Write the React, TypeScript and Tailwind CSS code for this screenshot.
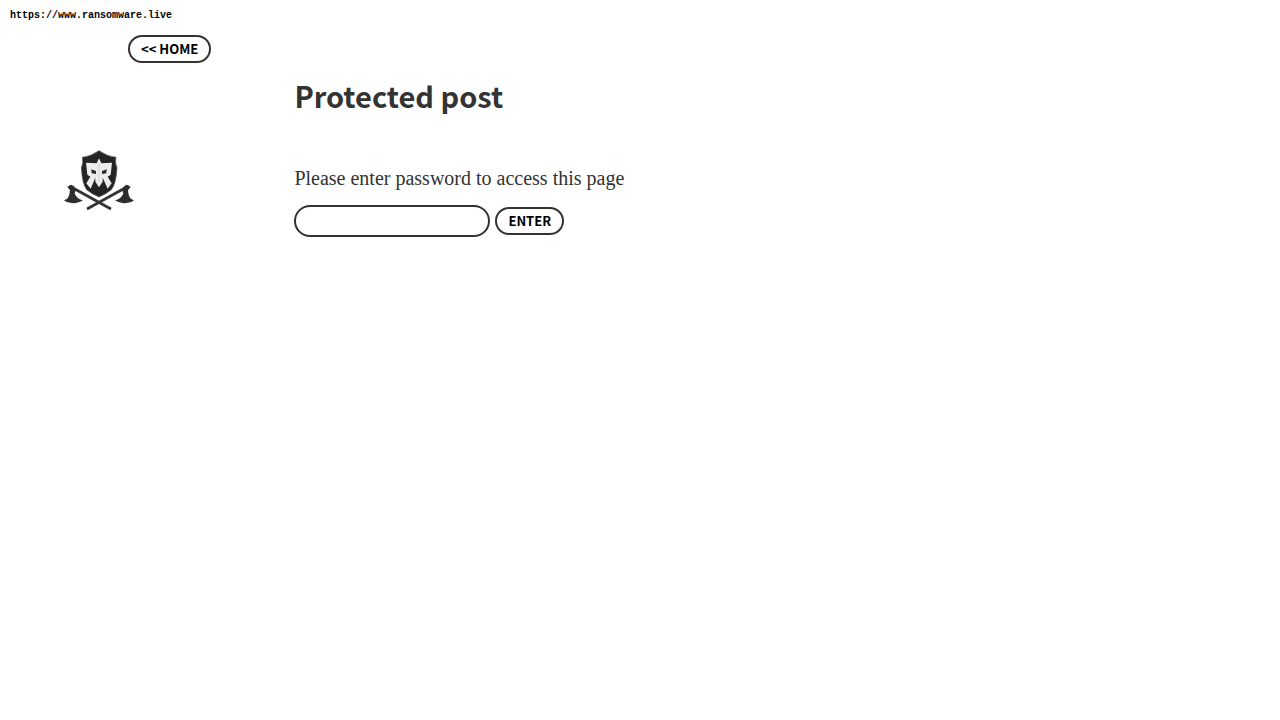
function Emblem() {
  return (
    <svg viewBox="27 29 210 183" className="h-[61px] w-[70px]" role="img" aria-label="Shield and crossed axes">
      <g stroke="#333" strokeWidth="8" fill="none">
        <path d="M43 137 L168 206" />
        <path d="M221 137 L96 206" />
      </g>
      <g fill="#2e2e2e">
        <path d="M37 139 L50 133 L58 139 L62 149 L59 160 Q66 175 84 180 Q68 191 52 188 Q36 189 27 180 Q43 174 44 157 L45 150 Z" />
        <path d="M227 139 L214 133 L206 139 L202 149 L205 160 Q198 175 180 180 Q196 191 212 188 Q228 189 237 180 Q221 174 220 157 L219 150 Z" />
      </g>
      <path fill="#242424" stroke="#4a4a4a" strokeWidth="2" d="M132 31 Q108 48 82 51 Q86 68 79 82 Q82 132 95 148 Q111 161 132 170 Q153 161 169 148 Q183 132 186 82 Q179 68 183 51 Q156 48 132 31 Z" />
      <path fill="#ededed" d="M132 54 L139 69 L171 67 L167 103 L158 109 L170 129 L158 145 L143 112 L143 124 L132 141 L121 124 L121 112 L107 145 L94 129 L106 109 L97 103 L93 67 L125 69 Z" />
      <g fill="#292929">
        <path d="M109 87 L123 92 L123 101 L110 99 Z" />
        <path d="M155 87 L141 92 L141 101 L154 99 Z" />
      </g>
      <path d="M132 70 V125" stroke="#d4d4d4" strokeWidth="3" />
    </svg>
  );
}

const pill =
  "h-7 rounded-full border-2 border-[#333] bg-white font-['Noto_Sans_CJK_SC',sans-serif] text-[13px] font-bold leading-5 text-black";

export default function App() {
  return (
    <div className="min-h-screen bg-white text-[#333]">
      <p className="px-[10px] pt-2 font-['Liberation_Mono',monospace] text-[10px] font-bold leading-4 text-black">
        https://www.ransomware.live
      </p>
      <nav className="mt-[11px] flex pl-[10%]">
        <a href="#home" className={`${pill} flex items-center px-[11px]`}>
          &lt;&lt; HOME
        </a>
      </nav>
      <div className="flex">
        <aside className="w-[23%] shrink-0 pl-[5%] pt-[87px]">
          <Emblem />
        </aside>
        <main className="min-w-0 flex-1 pt-3">
          <h1 className="font-['Noto_Sans_CJK_SC',sans-serif] text-[29px] font-bold leading-10">Protected post</h1>
          <form className="mt-12" onSubmit={(event) => event.preventDefault()}>
            <label htmlFor="password" className="block font-['Liberation_Serif',serif] text-xl leading-[30px]">
              Please enter password to access this page
            </label>
            <div className="mt-3 flex items-center gap-[5px]">
              <input
                id="password"
                type="password"
                className="h-8 w-[196px] rounded-full border-2 border-[#333] bg-white px-3 outline-none"
              />
              <button type="submit" className={`${pill} px-[11px]`}>
                ENTER
              </button>
            </div>
          </form>
        </main>
      </div>
    </div>
  );
}
